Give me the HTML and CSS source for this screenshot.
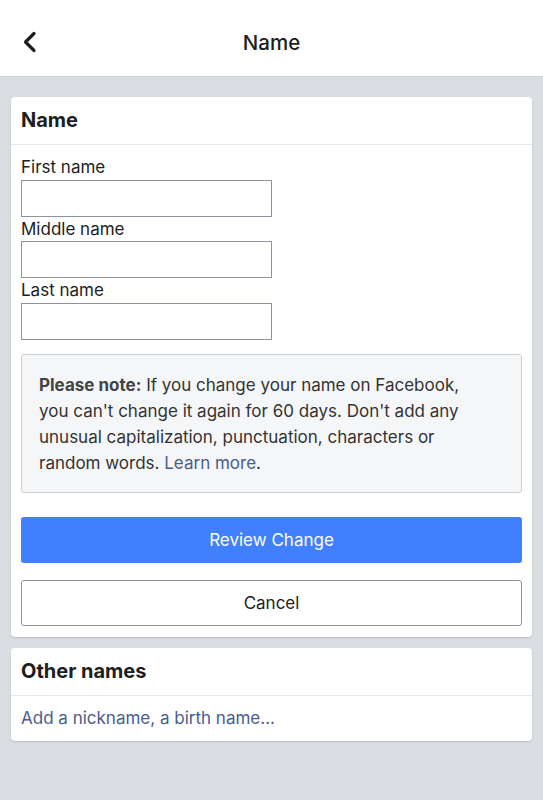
FILE: index.html
```html
<!DOCTYPE html>
<html lang="en">
<head>
<meta charset="utf-8">
<title>Name</title>
<link rel="stylesheet" href="styles.css">
</head>
<body>
<header class="topbar">
  <a class="back" href="#" aria-label="Back">
    <svg width="16" height="22" viewBox="0 0 16 22"><path d="M12 2.5 L3.5 11 L12 19.5" fill="none" stroke="#1c1e21" stroke-width="3.2" stroke-linecap="round" stroke-linejoin="round"/></svg>
  </a>
  <h1 class="title">Name</h1>
</header>
<main class="content">
  <section class="card">
    <h2 class="card-title">Name</h2>
    <div class="card-body">
      <label class="field"><span class="label">First name</span><input class="input" type="text"></label>
      <label class="field"><span class="label">Middle name</span><input class="input" type="text"></label>
      <label class="field"><span class="label">Last name</span><input class="input" type="text"></label>
      <div class="note"><b>Please note:</b> If you change your name on Facebook, you can't change it again for 60 days. Don't add any unusual capitalization, punctuation, characters or random words. <a href="#" class="link">Learn more</a>.</div>
      <button class="btn btn-primary">Review Change</button>
      <button class="btn btn-secondary">Cancel</button>
    </div>
  </section>
  <section class="card">
    <h2 class="card-title">Other names</h2>
    <div class="card-row"><a href="#" class="link">Add a nickname, a birth name...</a></div>
  </section>
</main>
</body>
</html>
```
FILE: styles.css
```css
* { box-sizing: border-box; }
html, body { margin: 0; padding: 0; }
body {
  background: #dadde1;
  font-family: Inter, "Liberation Sans", Arial, sans-serif;
  color: #1c1e21;
  min-height: 800px;
}
.topbar {
  height: 77px;
  background: #fff;
  border-bottom: 1px solid #cfd1d4;
  display: flex;
  align-items: center;
  justify-content: center;
  position: relative;
}
.back {
  position: absolute;
  left: 22px;
  top: 31px;
  display: flex;
}
.title {
  margin: 0;
  font-size: 20.5px;
  font-weight: 500;
  padding-top: 8px;
}
.content {
  padding: 20px 11px 0;
  display: flex;
  flex-direction: column;
  gap: 11px;
}
.card {
  background: #fff;
  border-radius: 4px;
  box-shadow: 0 1px 2px rgba(0,0,0,0.15);
}
.card-title {
  margin: 0;
  font-size: 20px;
  font-weight: 700;
  height: 48px;
  padding: 11px 10px 0;
  border-bottom: 1px solid #e4e6eb;
}
.card-body {
  padding: 10px 10px 11px;
  display: flex;
  flex-direction: column;
}
.field { display: flex; flex-direction: column; }
.label {
  font-size: 17px;
  line-height: 24px;
  height: 24.5px;
}
.input {
  width: 251px;
  height: 37px;
  border: 1px solid #8d949e;
  border-radius: 0;
  margin: 0;
  font: inherit;
}
.note {
  margin-top: 14px;
  background: #f5f6f7;
  border: 1px solid #ccd0d5;
  border-radius: 3px;
  padding: 17px 45px 16px 17px;
  font-size: 17px;
  line-height: 26px;
  color: #333;
}
.note b { font-weight: 700; color: #444; }
.link { color: #4b5c8c; text-decoration: none; }
.btn {
  height: 46px;
  font: inherit;
  font-size: 17px;
  border-radius: 3px;
  width: 100%;
}
.btn-primary {
  margin-top: 24px;
  background: #4080ff;
  color: #fff;
  border: none;
}
.btn-secondary {
  margin-top: 17px;
  background: #fff;
  color: #1c1e21;
  border: 1px solid #8d949e;
}
.card-row {
  padding: 10px 10px 11px;
  font-size: 17px;
  line-height: 24px;
}
```
